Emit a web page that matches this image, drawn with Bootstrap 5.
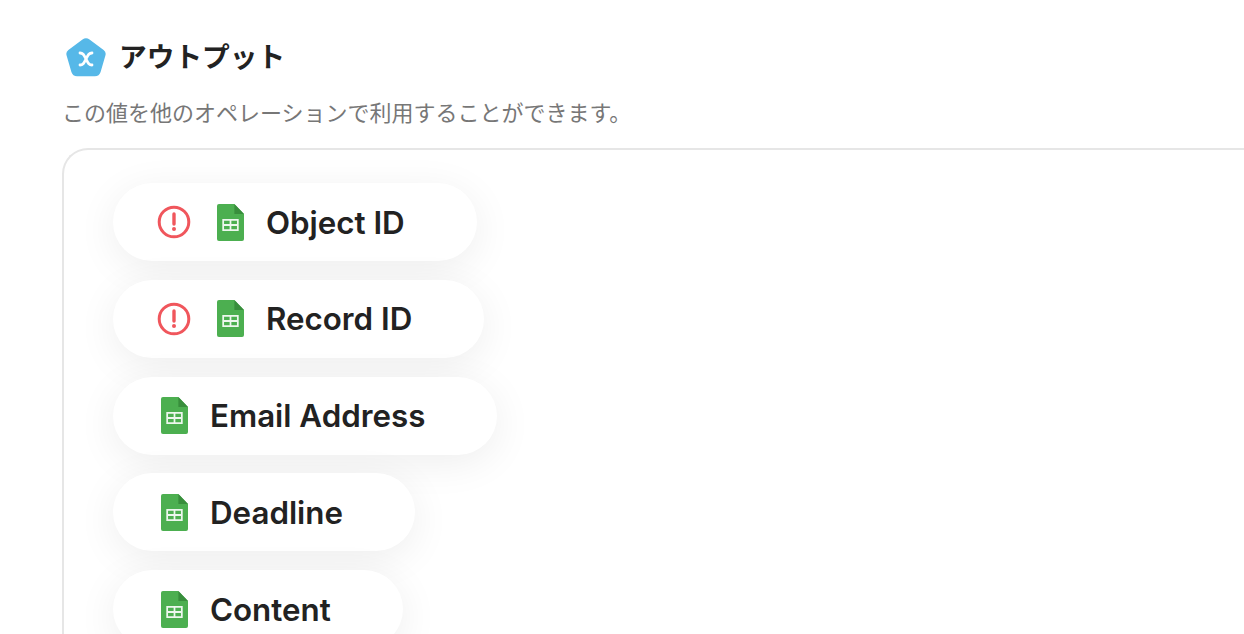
<!DOCTYPE html>
<html lang="ja">
<head>
  <meta charset="UTF-8" />
  <meta name="viewport" content="width=device-width, initial-scale=1" />
  <title>アウトプット</title>
  <link rel="stylesheet" href="https://cdn.jsdelivr.net/npm/bootstrap@5.3.3/dist/css/bootstrap.min.css" />
  <style>
    html, body { height: 634px; overflow: hidden; }
    body {
      background: #fff;
      font-family: "Inter", "Noto Sans CJK JP", sans-serif;
      color: #222;
    }
    .page-wrap { padding: 36px 0 0 62px; }
    .out-title {
      font-family: "Noto Sans CJK JP", sans-serif;
      font-size: 27.7px;
      font-weight: 700;
      line-height: 38px;
      margin: 0;
      color: #222;
    }
    .out-desc {
      font-family: "Noto Sans CJK JP", sans-serif;
      font-size: 22px;
      line-height: 32px;
      color: #777;
      margin: 17px 0 21px;
    }
    .out-box {
      border: 2px solid #e6e6e6;
      border-right: 0;
      border-bottom: 0;
      border-top-left-radius: 26px;
      padding: 33px 0 0 49px;
      height: 520px;
    }
    .out-pill {
      height: 78px;
      width: fit-content;
      padding: 0 72px 0 44px;
      margin-bottom: 18.8px;
      border-radius: 39px;
      background: #fff;
      box-shadow: 0 8px 40px rgba(0,0,0,.07);
      font-size: 31.3px;
      font-weight: 600;
      color: #222;
    }
    .out-pill span { padding-top: 2px; }
    .out-pill.pill-plain { padding-left: 47.5px; }
    .ic-alert { width: 34px; height: 34px; margin-right: 25.5px; flex: none; }
    .ic-sheet { width: 27px; height: 37px; margin-right: 22.5px; flex: none; }
    .ic-logo { width: 42px; height: 40px; margin: 2px 12px 0 3px; flex: none; }
  </style>
</head>
<body>
  <svg width="0" height="0" class="position-absolute">
    <defs>
      <symbol id="sheet" viewBox="0 0 28 37" preserveAspectRatio="none">
        <path d="M2 0H18L28 10V35a2 2 0 0 1-2 2H2a2 2 0 0 1-2-2V2a2 2 0 0 1 2-2Z" fill="#4caf50"/>
        <path d="M18 0L28 10H18Z" fill="#388e3c"/>
        <path d="M5.500 15H22.500V27H5.500Z M7.300 16.800V20.100H13.100V16.800Z M14.900 16.800V20.100H20.700V16.800Z M7.300 21.900V25.200H13.100V21.900Z M14.900 21.900V25.200H20.700V21.900Z" fill="#fff" fill-opacity=".9" fill-rule="evenodd"/>
      </symbol>
      <symbol id="alert" viewBox="0 0 34 34">
        <circle cx="17" cy="17" r="14.800" fill="none" stroke="#f0565c" stroke-width="3"/>
        <path d="M17 9V19" stroke="#f0565c" stroke-width="3.400" stroke-linecap="round"/>
        <circle cx="17" cy="24" r="2" fill="#f0565c"/>
      </symbol>
    </defs>
  </svg>

  <div class="page-wrap">
    <div class="d-flex align-items-start">
      <svg class="ic-logo" viewBox="0 0 42 40">
        <path d="M17.500 1.600a6 6 0 0 1 7 0L38.600 12a5 5 0 0 1 1.800 5.500L35.600 34a6 6 0 0 1-5.700 4.200H12.100A6 6 0 0 1 6.400 34L1.600 17.500A5 5 0 0 1 3.400 12Z" fill="#56b8e8"/>
        <path d="M15 15c3 0 3.800 1.800 6 6s3 6 6 6M27 15c-3 0-3.800 1.800-6 6s-3 6-6 6" fill="none" stroke="#fff" stroke-width="2.800" stroke-linecap="round"/>
      </svg>
      <h2 class="out-title">アウトプット</h2>
    </div>
    <p class="out-desc">この値を他のオペレーションで利用することができます。</p>
    <div class="out-box">
      <div class="out-pill d-flex align-items-center">
        <svg class="ic-alert"><use href="#alert"/></svg>
        <svg class="ic-sheet"><use href="#sheet"/></svg>
        <span>Object ID</span>
      </div>
      <div class="out-pill d-flex align-items-center">
        <svg class="ic-alert"><use href="#alert"/></svg>
        <svg class="ic-sheet"><use href="#sheet"/></svg>
        <span>Record ID</span>
      </div>
      <div class="out-pill pill-plain d-flex align-items-center">
        <svg class="ic-sheet"><use href="#sheet"/></svg>
        <span>Email Address</span>
      </div>
      <div class="out-pill pill-plain d-flex align-items-center">
        <svg class="ic-sheet"><use href="#sheet"/></svg>
        <span>Deadline</span>
      </div>
      <div class="out-pill pill-plain d-flex align-items-center">
        <svg class="ic-sheet"><use href="#sheet"/></svg>
        <span>Content</span>
      </div>
    </div>
  </div>
  <script src="https://cdn.jsdelivr.net/npm/bootstrap@5.3.3/dist/js/bootstrap.bundle.min.js"></script>
</body>
</html>
